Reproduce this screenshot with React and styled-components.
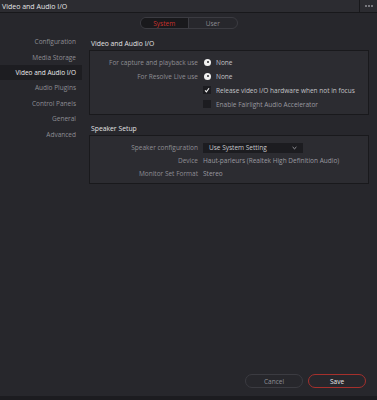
import React from 'react'
import styled, {createGlobalStyle} from 'styled-components'

const Global = createGlobalStyle`
  html, body {
    margin: 0;
    padding: 0;
    background: #27272c;
  }
  body {
    font-family: "Open Sans", "Noto Sans", sans-serif;
  }
`

const Window = styled.div`
  width: 377px;
  height: 400px;
  display: flex;
  flex-direction: column;
  background: #27272c;
  overflow: hidden;
`

const TitleBar = styled.div`
  height: 12px;
  display: flex;
  align-items: center;
  background: #2c2c31;
  border-bottom: 1px solid #18181b;
`

const Title = styled.div`
  flex: 1;
  padding-left: 2px;
  font-size: 7px;
  color: #e4e4e6;
`

const MoreButton = styled.div`
  width: 17px;
  height: 12px;
  border-left: 1px solid #18181b;
  display: flex;
  align-items: center;
  justify-content: center;
  gap: 1px;
`

const Dot = styled.span`
  width: 2px;
  height: 2px;
  background: #77777d;
`

const ToggleRow = styled.div`
  display: flex;
  justify-content: center;
  padding-top: 4px;
`

const Toggle = styled.div`
  display: flex;
  width: 98px;
  height: 12px;
  border: 1px solid #3b3b41;
  border-radius: 7px;
  overflow: hidden;
  box-sizing: border-box;
`

const ToggleOption = styled.div`
  flex: 1;
  display: flex;
  align-items: center;
  justify-content: center;
  font-size: 6.5px;
  color: ${p => (p.active ? '#c8322d' : '#8c8c92')};
  background: ${p => (p.active ? '#19191c' : 'transparent')};
  border-right: ${p => (p.active ? '1px solid #3b3b41' : 'none')};
`

const Body = styled.div`
  flex: 1;
  display: flex;
  padding-top: 5px;
`

const Sidebar = styled.div`
  width: 82px;
  display: flex;
  flex-direction: column;
`

const NavItem = styled.div`
  height: 15.4px;
  display: flex;
  align-items: center;
  justify-content: flex-end;
  padding-right: 6px;
  font-size: 6.5px;
  color: ${p => (p.active ? '#ececee' : '#8e8e94')};
  background: ${p => (p.active ? '#1d1d21' : 'transparent')};
`

const Main = styled.div`
  flex: 1;
  padding: 2px 8px 0 7px;
  display: flex;
  flex-direction: column;
`

const SectionTitle = styled.div`
  height: 14px;
  display: flex;
  align-items: center;
  padding-left: 2px;
  font-size: 6.8px;
  color: #e2e2e4;
`

const Panel = styled.div`
  background: #2c2c31;
  border: 1px solid #19191c;
  padding: ${p => p.pad || '4px 0 3px'};
  margin-bottom: 6px;
  display: grid;
  grid-template-columns: 108px 1fr;
  column-gap: 5px;
  align-items: center;
`

const Label = styled.div`
  height: ${p => p.h || 14}px;
  display: flex;
  align-items: center;
  justify-content: flex-end;
  font-size: 6.5px;
  color: #8e8e94;
  white-space: nowrap;
`

const Value = styled.div`
  height: ${p => p.h || 14}px;
  display: flex;
  align-items: center;
  gap: 5px;
  font-size: 6.5px;
  color: ${p => (p.muted ? '#9a9aa0' : '#c2c2c6')};
  white-space: nowrap;
`

const Radio = styled.span`
  width: 7px;
  height: 7px;
  border-radius: 50%;
  background: #f2f2f2;
  display: flex;
  align-items: center;
  justify-content: center;
  margin-left: 1px;
  &::after {
    content: '';
    width: 2px;
    height: 2px;
    border-radius: 50%;
    background: #2c2c31;
  }
`

const Check = styled.span`
  width: 8px;
  height: 8px;
  background: #1c1c20;
  display: flex;
  align-items: center;
  justify-content: center;
`

const Select = styled.div`
  width: 100px;
  height: 10px;
  background: #1c1c20;
  display: flex;
  align-items: center;
  justify-content: space-between;
  padding: 0 6px;
  box-sizing: border-box;
  font-size: 6.5px;
  color: #c8c8cc;
`

const Footer = styled.div`
  display: flex;
  justify-content: flex-end;
  gap: 5px;
  padding: 0 11px 8px 0;
`

const Button = styled.div`
  width: 58px;
  height: 14px;
  box-sizing: border-box;
  border-radius: 8px;
  border: 1px solid ${p => (p.primary ? '#a5302c' : '#3b3b41')};
  display: flex;
  align-items: center;
  justify-content: center;
  font-size: 6.5px;
  color: ${p => (p.primary ? '#e6e6e8' : '#8e8e94')};
`

const BottomStrip = styled.div`
  height: 4px;
  background: #1c1c20;
`

const navItems = [
  'Configuration',
  'Media Storage',
  'Video and Audio I/O',
  'Audio Plugins',
  'Control Panels',
  'General',
  'Advanced',
]

function CheckMark() {
  return (
    <svg width="6" height="6" viewBox="0 0 6 6">
      <path d="M1 3.4 L2.4 4.8 L5 1.2" stroke="#f0f0f0" strokeWidth="1.1" fill="none" />
    </svg>
  )
}

function Chevron() {
  return (
    <svg width="5" height="4" viewBox="0 0 5 4">
      <path d="M0.6 1 L2.5 2.8 L4.4 1" stroke="#bbbbc0" strokeWidth="0.8" fill="none" />
    </svg>
  )
}

export default function App() {
  return (
    <Window>
      <Global />
      <TitleBar>
        <Title>Video and Audio I/O</Title>
        <MoreButton>
          <Dot />
          <Dot />
          <Dot />
        </MoreButton>
      </TitleBar>
      <ToggleRow>
        <Toggle>
          <ToggleOption active>System</ToggleOption>
          <ToggleOption>User</ToggleOption>
        </Toggle>
      </ToggleRow>
      <Body>
        <Sidebar>
          {navItems.map(n => (
            <NavItem key={n} active={n === 'Video and Audio I/O'}>
              {n}
            </NavItem>
          ))}
        </Sidebar>
        <Main>
          <SectionTitle>Video and Audio I/O</SectionTitle>
          <Panel>
            <Label>For capture and playback use</Label>
            <Value><Radio />None</Value>
            <Label>For Resolve Live use</Label>
            <Value><Radio />None</Value>
            <Label />
            <Value><Check><CheckMark /></Check>Release video I/O hardware when not in focus</Value>
            <Label />
            <Value muted><Check />Enable Fairlight Audio Accelerator</Value>
          </Panel>
          <SectionTitle>Speaker Setup</SectionTitle>
          <Panel pad="5px 0 3px">
            <Label h={13}>Speaker configuration</Label>
            <Value h={13}>
              <Select>Use System Setting<Chevron /></Select>
            </Value>
            <Label h={13}>Device</Label>
            <Value h={13} muted>Haut-parleurs (Realtek High Definition Audio)</Value>
            <Label h={13}>Monitor Set Format</Label>
            <Value h={13} muted>Stereo</Value>
          </Panel>
        </Main>
      </Body>
      <Footer>
        <Button>Cancel</Button>
        <Button primary>Save</Button>
      </Footer>
      <BottomStrip />
    </Window>
  )
}
